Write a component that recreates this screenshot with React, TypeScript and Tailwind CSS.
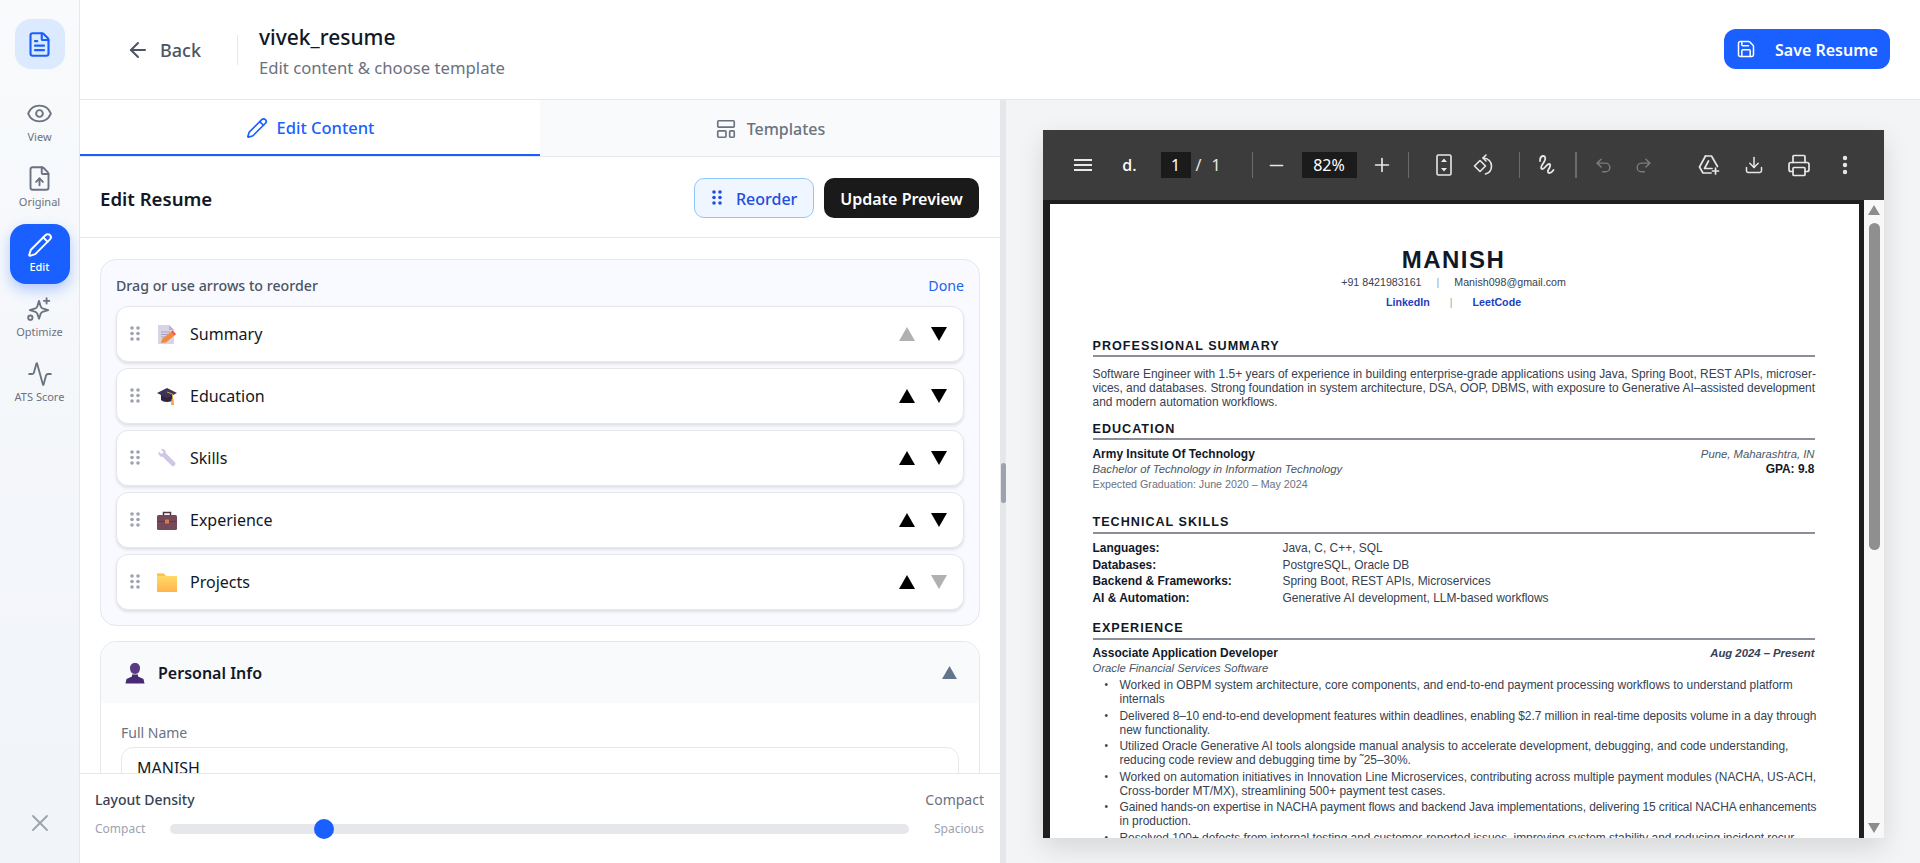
import {
  ArrowLeft,
  Activity,
  Download,
  Eye,
  FileText,
  FileUp,
  LayoutTemplate,
  Minus,
  MoreVertical,
  Pencil,
  Plus,
  Printer,
  Redo2,
  Save,
  Undo2,
  X,
} from "lucide-react";

const sideItems = [
  { label: "View", Icon: Eye },
  { label: "Original", Icon: FileUp },
];

function SparkleIcon() {
  return (
    <svg width="26" height="26" viewBox="0 0 24 24" fill="none" stroke="currentColor" strokeWidth="1.7" strokeLinejoin="round" strokeLinecap="round">
      <path d="M12 4.5l1.6 5.2a2.5 2.5 0 0 0 1.7 1.7l5.2 1.6-5.2 1.6a2.5 2.5 0 0 0-1.7 1.7L12 21l-1.6-4.7a2.5 2.5 0 0 0-1.7-1.7L3.5 13l5.2-1.6a2.5 2.5 0 0 0 1.7-1.7z" />
      <path d="M19 2v5M16.5 4.5h5" />
      <circle cx="4" cy="20" r="2" />
    </svg>
  );
}

function Dots({ className }: { className: string }) {
  return (
    <svg width="10" height="15" viewBox="0 0 10 15" className={className} fill="currentColor">
      {[2, 7.5, 13].map((y) => (
        <g key={y}>
          <circle cx="2" cy={y} r="1.8" />
          <circle cx="8" cy={y} r="1.8" />
        </g>
      ))}
    </svg>
  );
}

function EmojiSummary() {
  return (
    <svg width="20" height="21" viewBox="0 0 20 21">
      <path d="M1 1h11l5 5v14H1z" fill="#d9d3e6" />
      <path d="M12 1l5 5h-5z" fill="#b9b1cc" />
      <path d="M4 8h9M4 10.5h9M4 13h5" stroke="#a9a1bd" strokeWidth="1" />
      <path d="M4 19l1-4 9-7 3.5 3.5-8.500 7z" fill="#f28a3c" />
      <path d="M14 8l1.500-1.500 3.500 3.500-1.500 1.500z" fill="#f0524f" />
    </svg>
  );
}

function EmojiCap() {
  return (
    <svg width="20" height="20" viewBox="0 0 20 20">
      <path d="M4 9v5c2 2.500 10 2.500 12 0V9z" fill="#2d2440" />
      <path d="M10 2l10 5-10 5L0 7z" fill="#3d3358" />
      <path d="M10 6l5.500 2v5" fill="none" stroke="#d8a03a" strokeWidth="1" />
      <path d="M14.500 13h2l.5 6h-3z" fill="#f0a25c" />
    </svg>
  );
}

function EmojiWrench() {
  return (
    <svg width="20" height="20" viewBox="0 0 20 20">
      <path d="M1.500 3.500l3 2.500 2-1.800-2.500-3C6.500.3 9 2 8.700 5l9 9c1.200 1 .8 2.400.3 3.300-.7 1-2.200 1.500-3.300.5l-9-9C3 9 1 6.500 1.500 3.500z" fill="#d0c8e2" />
    </svg>
  );
}

function EmojiCase() {
  return (
    <svg width="20" height="19" viewBox="0 0 20 19">
      <path d="M6.500 4V1.500h7V4" fill="none" stroke="#4f3340" strokeWidth="1.500" />
      <rect y="4" width="20" height="15" rx="1.500" fill="#74495a" />
      <rect y="10" width="20" height="1" fill="#5d3a49" />
      <rect x="8" y="8.500" width="4" height="4" rx=".6" fill="#d67b52" />
    </svg>
  );
}

function EmojiFolder() {
  return (
    <svg width="20" height="20" viewBox="0 0 20 20">
      <defs>
        <linearGradient id="fld" x1="0" y1="0" x2="0" y2="1">
          <stop offset="0" stopColor="#ffdf6b" />
          <stop offset="1" stopColor="#ffb54f" />
        </linearGradient>
      </defs>
      <path d="M0 1.500h6.500l2.500 2.500h11v16H0z" fill="url(#fld)" />
      <path d="M0 1.500h6.500l2.500 2.500H0z" fill="#fcc346" />
    </svg>
  );
}

function EmojiPerson() {
  return (
    <svg width="20" height="22" viewBox="0 0 20 22">
      <path d="M10 1c3 0 5 2 5 5 0 3-1.500 6-5 6S5 9 5 6c0-3 2-5 5-5z" fill="#5a3a85" />
      <path d="M7 12.500h6v2l5.500 2.500 1 4.500H.5l1-4.500L7 14.500z" fill="#472a73" />
    </svg>
  );
}

function Triangle({ down, off }: { down?: boolean; off?: boolean }) {
  return (
    <svg width="16" height="14" viewBox="0 0 16 14" className={off ? "text-[#b0b0b0]" : "text-black"} fill="currentColor">
      <polygon points={down ? "0,0 16,0 8,14" : "8,0 16,14 0,14"} />
    </svg>
  );
}

const sections = [
  { name: "Summary", icon: <EmojiSummary />, upOff: true },
  { name: "Education", icon: <EmojiCap /> },
  { name: "Skills", icon: <EmojiWrench /> },
  { name: "Experience", icon: <EmojiCase /> },
  { name: "Projects", icon: <EmojiFolder />, downOff: true },
];

const skills = [
  ["Languages:", "Java, C, C++, SQL", "mt-[7px]"],
  ["Databases:", "PostgreSQL, Oracle DB", "mt-[3px]"],
  ["Backend & Frameworks:", "Spring Boot, REST APIs, Microservices", "mt-[2px]"],
  ["AI & Automation:", "Generative AI development, LLM-based workflows", "mt-[3px]"],
];

// third value squeezes the long line so it ends on the right margin, as the justified pdf text does
const bullets = [
  ["Worked in OBPM system architecture, core components, and end-to-end payment processing workflows to understand platform", "internals", ""],
  ["Delivered 8–10 end-to-end development features within deadlines, enabling $2.7 million in real-time deposits volume in a day through", "new functionality.", "tracking-[-0.055px]"],
  ["Utilized Oracle Generative AI tools alongside manual analysis to accelerate development, debugging, and code understanding,", "reducing code review and debugging time by ˜25–30%.", ""],
  ["Worked on automation initiatives in Innovation Line Microservices, contributing across multiple payment modules (NACHA, US-ACH,", "Cross-border MT/MX), streamlining 500+ payment test cases.", "tracking-[-0.02px]"],
  ["Gained hands-on expertise in NACHA payment flows and backend Java implementations, delivering 15 critical NACHA enhancements", "in production.", "tracking-[-0.09px]"],
  ["Resolved 100+ defects from internal testing and customer-reported issues, improving system stability and reducing incident recur-", "rence.", "tracking-[-0.05px]"],
];

function SectionTitle({ children, className, low }: { children: string; className: string; low?: boolean }) {
  return (
    <div className={className}>
      <div className={"h-[16px] text-[12.6px] font-bold tracking-[1px] text-[#111827] " + (low ? "leading-[18px]" : "leading-[16px]")}>{children}</div>
      <div className="mt-[2px] h-[2px] bg-[#8b8f9c]" />
    </div>
  );
}

function PdfPage() {
  return (
    <div className="h-full overflow-hidden bg-white pl-[43px] pr-[44px] text-[11.95px] leading-[14px] text-[#374151] [font-family:'Liberation_Sans',Arial,sans-serif]">
      <div className="mt-[43px] h-[26px] text-center text-[24px] leading-[26px] font-bold tracking-[1.5px] text-[#111827]">MANISH</div>
      <div className="mt-[2px] flex justify-center text-[10.66px]">
        <span>+91 8421983161</span>
        <span className="mx-[15px] text-[#9ca3af]">|</span>
        <span>Manish098@gmail.com</span>
      </div>
      <div className="mt-[6px] flex justify-center text-[10.66px] font-bold text-[#1d40c0]">
        <span>LinkedIn</span>
        <span className="mx-[20px] font-normal text-[#9ca3af]">|</span>
        <span>LeetCode</span>
      </div>
      <SectionTitle low className="mt-[28px]">PROFESSIONAL SUMMARY</SectionTitle>
      <div className="mt-[10px] whitespace-nowrap">
        <p>Software Engineer with 1.5+ years of experience in building enterprise-grade applications using Java, Spring Boot, REST APIs, microser-</p>
        <p className="tracking-[-0.04px]">vices, and databases. Strong foundation in system architecture, DSA, OOP, DBMS, with exposure to Generative AI–assisted development</p>
        <p>and modern automation workflows.</p>
      </div>
      <SectionTitle low className="mt-[11px]">EDUCATION</SectionTitle>
      <div className="mt-[7px] flex justify-between">
        <div>
          <p className="font-bold text-[#111827]">Army Insitute Of Technology</p>
          <p className="mt-[1px] text-[11.3px] italic text-[#4b5563]">Bachelor of Technology in Information Technology</p>
          <p className="mt-[1px] text-[10.7px] text-[#6b7280]">Expected Graduation: June 2020 – May 2024</p>
        </div>
        <div className="text-right">
          <p className="text-[11.3px] italic text-[#4b5563]">Pune, Maharashtra, IN</p>
          <p className="mt-[1px] font-bold text-[#111827]">GPA: 9.8</p>
        </div>
      </div>
      <SectionTitle className="mt-[23px]">TECHNICAL SKILLS</SectionTitle>
      <div>
        {skills.map(([label, value, gap]) => (
          <div key={label} className={"flex " + gap}>
            <span className="w-[190px] font-bold text-[#111827]">{label}</span>
            <span>{value}</span>
          </div>
        ))}
      </div>
      <SectionTitle className="mt-[15px]">EXPERIENCE</SectionTitle>
      <div className="mt-[6px] flex justify-between">
        <span className="font-bold text-[#111827]">Associate Application Developer</span>
        <span className="text-[11.3px] font-bold italic text-[#374151]">Aug 2024 – Present</span>
      </div>
      <p className="mt-[1px] text-[11.3px] italic text-[#4b5563]">Oracle Financial Services Software</p>
      <ul className="mt-[3px]">
        {bullets.map(([first, second, squeeze]) => (
          <li key={first} className="relative mb-[2.5px] whitespace-nowrap pl-[27px]">
            <span className="absolute left-[12px] top-0 text-[10px]">•</span>
            <p className={squeeze}>{first}</p>
            <p>{second}</p>
          </li>
        ))}
      </ul>
    </div>
  );
}

function PdfViewer() {
  return (
    <div className="flex h-[708px] w-[841px] flex-col shadow-[0_10px_25px_rgba(0,0,0,0.12)]">
      <div className="flex h-[70px] shrink-0 items-center bg-[#3c3c3c] text-white">
        <svg width="20" height="16" viewBox="0 0 20 16" fill="#e8e8e8" className="ml-[30px]">
          <rect x="1" y="2" width="18" height="2" />
          <rect x="1" y="7" width="18" height="2" />
          <rect x="1" y="12" width="18" height="2" />
        </svg>
        <span className="ml-[25px] w-6 text-center text-[16px] font-medium">d.</span>
        <span className="ml-[19px] flex h-[26px] w-[30px] items-center justify-center bg-[#1b1b1b] text-[16px]">1</span>
        <span className="ml-[4px] w-2 text-center text-[16px] text-[#e8e8e8]">/</span>
        <span className="ml-[9px] w-2 text-center text-[16px] text-[#e8e8e8]">1</span>
        <span className="ml-[32px] h-[26px] w-px bg-[#6c6c6c]" />
        <span className="ml-[12px] flex w-6 justify-center"><Minus size={21} strokeWidth={1.8} className="text-[#e8e8e8]" /></span>
        <span className="ml-[13px] flex h-[26px] w-[55px] items-center justify-center bg-[#1b1b1b] text-[16px]">82%</span>
        <span className="ml-[13px] flex w-6 justify-center"><Plus size={22} strokeWidth={1.8} className="text-[#e8e8e8]" /></span>
        <span className="ml-[14px] h-[26px] w-px bg-[#6c6c6c]" />
        <span className="ml-[23px] flex w-6 justify-center">
          <svg width="18" height="22" viewBox="0 0 18 22" fill="none" stroke="#e8e8e8" strokeWidth="1.600">
            <rect x="2" y="1" width="14" height="20" rx="1.500" />
            <path d="M9 4.500l3 3.500H6zM9 17.500L6 14h6z" fill="#e8e8e8" stroke="none" />
          </svg>
        </span>
        <span className="ml-[15px] flex w-6 justify-center">
          <svg width="24" height="24" viewBox="0 0 24 24" fill="none" stroke="#e8e8e8" strokeWidth="1.600" strokeLinejoin="round" strokeLinecap="round">
            <path d="M9 7.500L3.500 13 9 18.500 14.500 13z" />
            <path d="M12 5c5.500 0 8.500 4 8.500 8s-2.500 7-6 8" />
            <path d="M15 2l-3 3 3 3" />
          </svg>
        </span>
        <span className="ml-[24px] h-[26px] w-px bg-[#6c6c6c]" />
        <span className="ml-[14px] flex w-6 justify-center">
          <svg width="22" height="24" viewBox="0 0 22 24" fill="none" stroke="#e8e8e8" strokeWidth="1.800" strokeLinecap="round" strokeLinejoin="round">
            <path d="M5 8c0-3 1.500-5 3.500-5S11 6 9 9s-4 6-2 7 4.500-5 7-5 .5 4-.5 5.500-1 3.500 1 3.500 3-1.500 4-3" />
          </svg>
        </span>
        <span className="ml-[17px] h-[26px] w-[2px] bg-[#6c6c6c]" />
        <span className="ml-[15px] flex w-6 justify-center"><Undo2 size={19} strokeWidth={1.8} className="text-[#7c7c7c]" /></span>
        <span className="ml-[16px] flex w-6 justify-center"><Redo2 size={19} strokeWidth={1.8} className="text-[#7c7c7c]" /></span>
        <span className="ml-[41px] flex w-6 justify-center">
          <svg width="24" height="24" viewBox="0 0 24 24" fill="none" stroke="#e8e8e8" strokeWidth="1.700" strokeLinejoin="round" strokeLinecap="round">
            <path d="M8.500 3h6l6 10.500" />
            <path d="M8.500 3L2.500 14l3.500 6h8" />
            <path d="M11.500 8L7.500 15.500h7.500" />
            <path d="M18.500 15v6M15.500 18h6" />
          </svg>
        </span>
        <span className="ml-[21px] flex w-6 justify-center"><Download size={20} strokeWidth={1.800} className="text-[#e8e8e8]" /></span>
        <span className="ml-[21px] flex w-6 justify-center"><Printer size={25} strokeWidth={1.700} className="text-[#e8e8e8]" /></span>
        <span className="ml-[22px] flex w-6 justify-center"><MoreVertical size={24} strokeWidth={2.400} className="text-[#e8e8e8]" /></span>
      </div>
      <div className="flex min-h-0 flex-1 bg-[#1f1f1f]">
        <div className="ml-[7px] mr-[5px] mt-[4px] w-[809px]">
          <PdfPage />
        </div>
        <div className="flex w-[20px] flex-col items-center bg-[#f8f8f8] pl-[1px]">
          <svg width="12" height="10" viewBox="0 0 12 10" fill="#8c8c8c" className="mt-[5px]">
            <polygon points="6,0 12,10 0,10" />
          </svg>
          <div className="mt-[8px] h-[327px] w-[11px] rounded-full bg-[#8f8f8f]" />
          <svg width="12" height="10" viewBox="0 0 12 10" fill="#8c8c8c" className="mt-auto mb-[5px]">
            <polygon points="0,0 12,0 6,10" />
          </svg>
        </div>
      </div>
    </div>
  );
}

export default function App() {
  return (
    <div className="flex h-[863px] w-[1920px] overflow-hidden bg-white text-[#111827] [font-family:'Noto_Sans',sans-serif]">
      {/* icon rail */}
      <aside className="flex w-[80px] shrink-0 flex-col items-center border-r border-[#e5e7eb] bg-gradient-to-b from-[#f8fafc] to-[#f1f4f9]">
        <div className="mt-[19px] flex h-[50px] w-[50px] items-center justify-center rounded-2xl bg-[#dbeafe]">
          <FileText size={27} strokeWidth={1.9} className="text-[#1a5fff]" />
        </div>
        <div className="mt-[21px] flex flex-col items-center">
          {sideItems.map(({ label, Icon }) => (
            <div key={label} className="flex h-[65px] flex-col items-center justify-center text-[#6b7280]">
              <Icon size={27} strokeWidth={1.700} />
              <span className="mt-[2px] text-[11px] leading-[16px]">{label}</span>
            </div>
          ))}
          <div className="mt-[4px] flex h-[60px] w-[60px] flex-col items-center justify-center rounded-2xl bg-[#1a5fff] pb-[2px] text-white shadow-[0_6px_14px_rgba(26,95,255,0.3)]">
            <Pencil size={26} strokeWidth={1.800} />
            <span className="mt-[1px] text-[11px] leading-[16px] font-medium">Edit</span>
          </div>
          <div className="mt-[1px] flex h-[65px] flex-col items-center justify-center text-[#6b7280]">
            <SparkleIcon />
            <span className="mt-[2px] text-[11px] leading-[16px]">Optimize</span>
          </div>
          <div className="flex h-[65px] flex-col items-center justify-center text-[#6b7280]">
            <Activity size={26} strokeWidth={1.700} />
            <span className="mt-[2px] text-[11px] leading-[16px]">ATS Score</span>
          </div>
        </div>
        <X size={28} strokeWidth={1.600} className="mt-auto mb-[26px] text-[#9ca3af]" />
      </aside>

      <main className="flex min-w-0 flex-1 flex-col">
        <header className="flex h-[100px] shrink-0 items-center border-b border-[#e5e7eb] bg-white pr-[30px]">
          <div className="ml-[46px] flex items-center text-[#4b5563]">
            <ArrowLeft size={24} strokeWidth={2} />
            <span className="ml-[10px] mt-[2px] text-[18px] font-medium">Back</span>
          </div>
          <div className="ml-[36px] h-[30px] w-px bg-[#e5e7eb]" />
          <div className="ml-[21px] pt-[4px]">
            <h1 className="text-[21px] leading-[28px] font-medium text-[#111827]">vivek_resume</h1>
            <p className="mt-[5px] text-[16.7px] leading-[24px] text-[#6b7280]">Edit content &amp; choose template</p>
          </div>
          <button className="ml-auto -mt-[1px] flex h-[40px] w-[166px] items-center rounded-xl bg-[#1a5fff] pl-[12px] text-white">
            <Save size={20} strokeWidth={1.800} />
            <span className="ml-[19px] mt-[2px] text-[16px] font-semibold">Save Resume</span>
          </button>
        </header>

        <div className="flex min-h-0 flex-1">
          {/* editor */}
          <section className="flex w-[920px] shrink-0 flex-col bg-white">
            <div className="flex h-[57px] shrink-0 border-b border-[#e5e7eb]">
              <div className="flex w-[460px] items-center justify-center border-b-2 border-[#1a5fff] pt-[2px] text-[#1a5fff]">
                <Pencil size={22} strokeWidth={1.800} />
                <span className="ml-[9px] text-[16.5px] font-medium">Edit Content</span>
              </div>
              <div className="flex w-[460px] items-center justify-center bg-[#f8fafc] pt-[2px] text-[#6b7280]">
                <LayoutTemplate size={22} strokeWidth={1.800} />
                <span className="ml-[10px] text-[16px] font-medium">Templates</span>
              </div>
            </div>
            <div className="flex h-[81px] shrink-0 items-center border-b border-[#e5e7eb] pl-[20px] pr-[21px] pt-[1px]">
              <h2 className="mt-[2px] text-[18.6px] font-semibold text-[#111827]">Edit Resume</h2>
              <button className="ml-auto flex h-[40px] w-[120px] items-center rounded-[10px] border border-[#93c5fd] bg-[#eff6ff] pl-[17px] text-[#1d4fe0]">
                <Dots className="text-[#1d4fe0]" />
                <span className="ml-[14px] mt-[2px] text-[16px] font-medium">Reorder</span>
              </button>
              <button className="ml-[10px] h-[40px] w-[155px] rounded-[10px] bg-[#1a1a1a] pt-[2px] text-[16px] font-semibold text-white">Update Preview</button>
            </div>

            <div className="relative min-h-0 flex-1 overflow-hidden px-[20px] pt-[21px]">
              <div className="rounded-2xl border border-[#e2e8f0] bg-[#f8faff] px-[15px] pb-[15px] pt-[16px]">
                <div className="flex h-[20px] items-center justify-between">
                  <span className="text-[14.2px] font-medium text-[#4b5563]">Drag or use arrows to reorder</span>
                  <span className="text-[14.2px] text-[#2563eb]">Done</span>
                </div>
                <div className="mt-[10px] flex flex-col gap-[6px]">
                  {sections.map((s) => (
                    <div key={s.name} className="flex h-[56px] items-center rounded-xl border border-[#e5e7eb] bg-white pl-[13px] pr-[16px] shadow-[0_2px_3px_rgba(0,0,0,0.1)]">
                      <Dots className="-mt-[2px] text-[#9ca3af]" />
                      <span className="ml-[16px] flex w-[21px] justify-center">{s.icon}</span>
                      <span className="ml-[13px] text-[16px] text-[#111827]">{s.name}</span>
                      <span className="ml-auto flex items-center gap-[16px]">
                        <Triangle off={s.upOff} />
                        <Triangle down off={s.downOff} />
                      </span>
                    </div>
                  ))}
                </div>
              </div>

              <div className="mt-[15px] overflow-hidden rounded-2xl border border-[#e5e7eb] bg-white">
                <div className="flex h-[61px] items-center bg-[#f8fafc] pl-[24px] pr-[22px]">
                  <EmojiPerson />
                  <span className="ml-[13px] text-[16px] font-semibold text-[#111827]">Personal Info</span>
                  <svg width="15" height="13" viewBox="0 0 16 14" fill="#64748b" className="ml-auto">
                    <polygon points="8,0 16,14 0,14" />
                  </svg>
                </div>
                <div className="px-[20px] pt-[20px]">
                  <label className="block text-[14px] leading-[20px] text-[#6b7280]">Full Name</label>
                  <div className="mt-[4px] h-[44px] rounded-xl border border-[#e5e7eb] px-[15px] py-[8px] text-[16px]">MANISH</div>
                </div>
              </div>

              <div className="absolute inset-x-0 bottom-0 h-[90px] border-t border-[#e5e7eb] bg-white px-[15px] pt-[15px]">
                <div className="flex items-center justify-between">
                  <span className="text-[14px] font-medium text-[#374151]">Layout Density</span>
                  <span className="pr-[1px] text-[14px] text-[#6b7280]">Compact</span>
                </div>
                <div className="mt-[10px] flex items-center">
                  <span className="w-[75px] text-[12px] text-[#9ca3af]">Compact</span>
                  <div className="relative h-[10px] w-[739px] rounded-full bg-[#e5e7eb]">
                    <span className="absolute -top-[5px] left-[144px] h-[20px] w-[20px] rounded-full bg-[#1a5fff]" />
                  </div>
                  <span className="ml-auto pr-[1px] text-[12px] text-[#9ca3af]">Spacious</span>
                </div>
              </div>
            </div>
          </section>

          {/* splitter */}
          <div className="relative w-[6px] shrink-0 bg-[#e5e7eb]">
            <span className="absolute left-[1px] top-[363px] h-[40px] w-[5px] rounded-full bg-[#9ca3af]" />
          </div>

          {/* preview */}
          <section className="flex min-w-0 flex-1 justify-center bg-[#f3f4f6] pt-[30px]">
            <PdfViewer />
          </section>
        </div>
      </main>
    </div>
  );
}
